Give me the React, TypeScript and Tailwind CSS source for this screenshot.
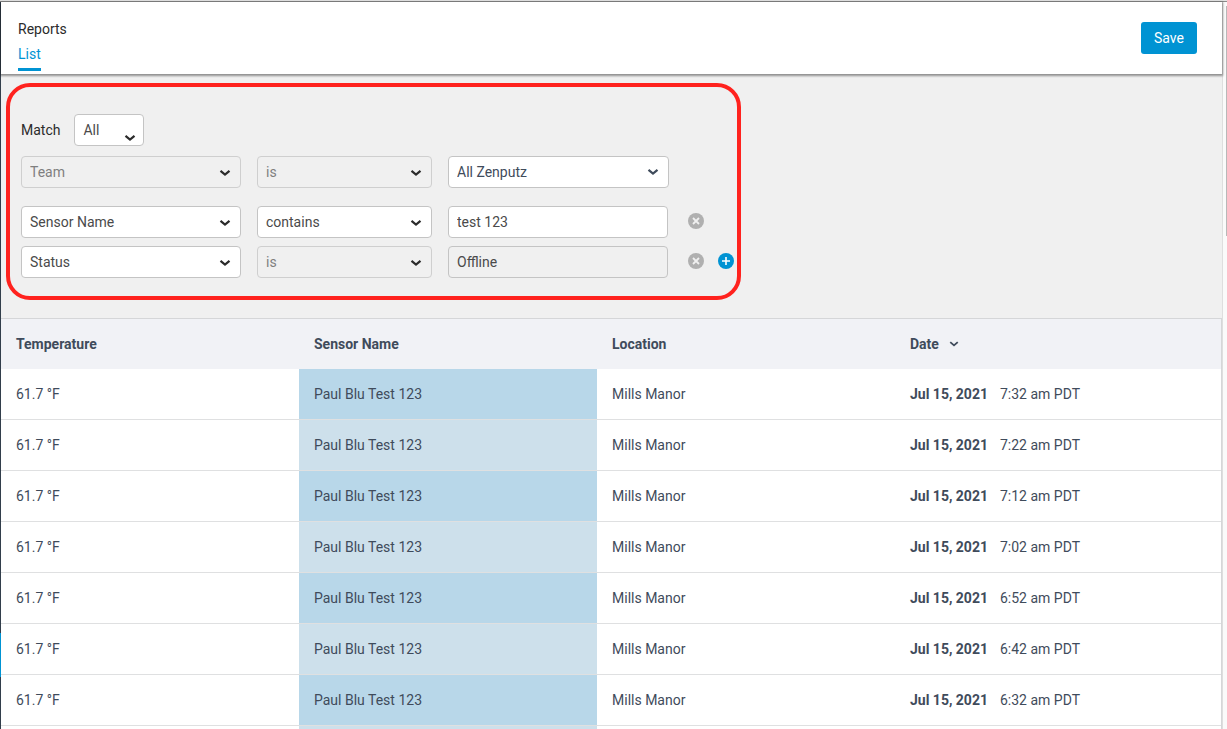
import clsx from 'clsx'

const times = ['7:32', '7:22', '7:12', '7:02', '6:52', '6:42', '6:32']

function Chevron({ className }: { className?: string }) {
  return (
    <svg viewBox="0 0 12 8" fill="none" stroke="currentColor" strokeWidth="2.2" className={clsx('pointer-events-none', className)}>
      <path d="M1.5 1.8 L6 5.6 L10.5 1.8" />
    </svg>
  )
}

type SelectProps = {
  label: string
  value: string
  width: string
  disabled?: boolean
  color?: string
  arrow?: string
}

function Select({ label, value, width, disabled, color = 'text-[#4a4a4a]', arrow = 'top-[13px] right-2.5 text-[#2b2b2b]' }: SelectProps) {
  return (
    <div className={clsx('relative', width)}>
      <select
        aria-label={label}
        disabled={disabled}
        className={clsx(
          'block h-8 w-full appearance-none rounded border pl-2 pr-6 text-sm opacity-100',
          disabled ? 'border-[#cfcfcf] bg-[#f0f0f0] text-[#7f7f7f]' : 'border-[#c4c4c4] bg-white',
          !disabled && color
        )}
      >
        <option>{value}</option>
      </select>
      <Chevron className={clsx('absolute h-2 w-3', arrow)} />
    </div>
  )
}

function RemoveButton() {
  return (
    <button type="button" aria-label="Remove filter" className="mb-0.5 ml-5">
      <svg viewBox="0 0 16 16" className="h-4 w-4">
        <circle cx="8" cy="8" r="8" fill="#b0b0b0" />
        <path d="M5 5 L11 11 M11 5 L5 11" stroke="#f0f0f0" strokeWidth="1.8" />
      </svg>
    </button>
  )
}

function AddButton() {
  return (
    <button type="button" aria-label="Add filter" className="mb-0.5 ml-3.5">
      <svg viewBox="0 0 16 16" className="h-4 w-4">
        <circle cx="8" cy="8" r="8" fill="#0093d3" />
        <path d="M8 4 V12 M4 8 H12" stroke="#fff" strokeWidth="1.6" />
      </svg>
    </button>
  )
}

function Header() {
  return (
    <header className="relative flex items-start justify-between bg-white pt-5 pr-[25px] pb-[3px] pl-[17px] shadow-[0_1px_2px_1px_rgba(0,0,0,0.4)]">
      <div className="flex flex-col items-start">
        <h1 className="text-sm leading-[14px] text-[#2b2b2b]">Reports</h1>
        <a href="#list" className="mt-2 border-b-3 border-[#0093d3] pb-1 text-sm leading-5 text-[#0093d3]">
          List
        </a>
      </div>
      <button type="button" className="h-8 w-14 rounded-[3px] bg-[#0093d3] text-sm text-white">
        Save
      </button>
    </header>
  )
}

function Filters() {
  return (
    <section className="pt-[9px] pb-[18px] pl-[5px]">
      <div className="w-fit rounded-3xl border-4 border-[#ff221e] pt-[27px] pr-[3px] pb-[18px] pl-[11px]">
        <div className="flex items-center">
          <span className="mr-3.5 text-sm text-[#2b2b2b]">Match</span>
          <Select label="Match" value="All" width="w-[70px]" arrow="top-5 right-2 text-[#2b2b2b]" />
        </div>
        <div className="mt-2.5 flex gap-4">
          <Select label="Field" value="Team" width="w-[220px]" disabled />
          <Select label="Operator" value="is" width="w-[175px]" disabled />
          <Select label="Team" value="All Zenputz" width="w-[221px]" color="text-[#3f4b5b]" arrow="top-3 right-2.5 text-[#3f4b5b]" />
        </div>
        <div className="mt-[18px] flex items-center">
          <div className="flex gap-4">
            <Select label="Field" value="Sensor Name" width="w-[220px]" />
            <Select label="Operator" value="contains" width="w-[175px]" />
            <input aria-label="Value" defaultValue="test 123" className="h-8 w-[220px] rounded border border-[#c4c4c4] bg-white px-2 text-sm text-[#4a4a4a]" />
          </div>
          <RemoveButton />
        </div>
        <div className="mt-2 flex items-center">
          <div className="flex gap-4">
            <Select label="Field" value="Status" width="w-[220px]" />
            <Select label="Operator" value="is" width="w-[175px]" disabled />
            <input aria-label="Value" readOnly value="Offline" className="h-8 w-[220px] rounded border border-[#c4c4c4] bg-[#f0f0f0] px-2 text-sm text-[#4a4a4a]" />
          </div>
          <RemoveButton />
          <AddButton />
        </div>
      </div>
    </section>
  )
}

function ReportTable() {
  return (
    <div className="border-t border-r border-[#d5d6d8] bg-white">
      <table className="w-full table-fixed border-separate border-spacing-0 text-left text-sm text-[#3f4b5b]">
        <thead>
          <tr className="h-[50px] bg-[#f1f2f6]">
            <th className="w-[298px] px-[15px] font-bold">Temperature</th>
            <th className="w-[298px] px-[15px] font-bold">Sensor Name</th>
            <th className="w-[298px] px-[15px] font-bold">Location</th>
            <th className="px-[15px] font-bold">
              <button type="button" className="flex items-center gap-2.5 font-bold">
                Date
                <Chevron className="h-2 w-2.5" />
              </button>
            </th>
          </tr>
        </thead>
        <tbody>
          {times.map((time, i) => (
            <tr key={time} className="h-[51px]">
              <td className="border-b border-[#dfe0e1] px-[15px]">61.7 °F</td>
              <td className={clsx('border-b border-[#dfe0e1] px-[15px]', i % 2 ? 'bg-[#cde0eb]' : 'bg-[#b8d7e9]')}>Paul Blu Test 123</td>
              <td className="border-b border-[#dfe0e1] px-[15px]">Mills Manor</td>
              <td className="border-b border-[#dfe0e1] px-[15px]">
                <span className="mr-3 font-bold">Jul 15, 2021</span>
                {time} am PDT
              </td>
            </tr>
          ))}
          <tr className="h-[51px]">
            <td />
            <td className="bg-[#cde0eb]" />
            <td />
            <td />
          </tr>
        </tbody>
      </table>
    </div>
  )
}

export default function App() {
  return (
    <div className="flex h-screen flex-col overflow-hidden bg-[#f0f0f0] font-[Roboto,sans-serif]">
      <div className="h-0.5 shrink-0 border-b border-[#8c8c8c] bg-[#e4e4e4]" />
      <div className="flex min-h-0 flex-1">
        {/* edge of the collapsed side menu */}
        <div className="flex w-px shrink-0 flex-col bg-[#323e4b]">
          <div className="mt-auto mb-[52px] h-11 bg-[#0093d3]" />
        </div>
        <main className="min-w-0 flex-1">
          <Header />
          <Filters />
          <ReportTable />
        </main>
        <div className="flex w-[5px] shrink-0 justify-end border-l border-[#dedede] bg-[#fafafa] pt-1">
          <div className="h-[230px] w-px bg-[#b8b8b8]" />
        </div>
      </div>
    </div>
  )
}
